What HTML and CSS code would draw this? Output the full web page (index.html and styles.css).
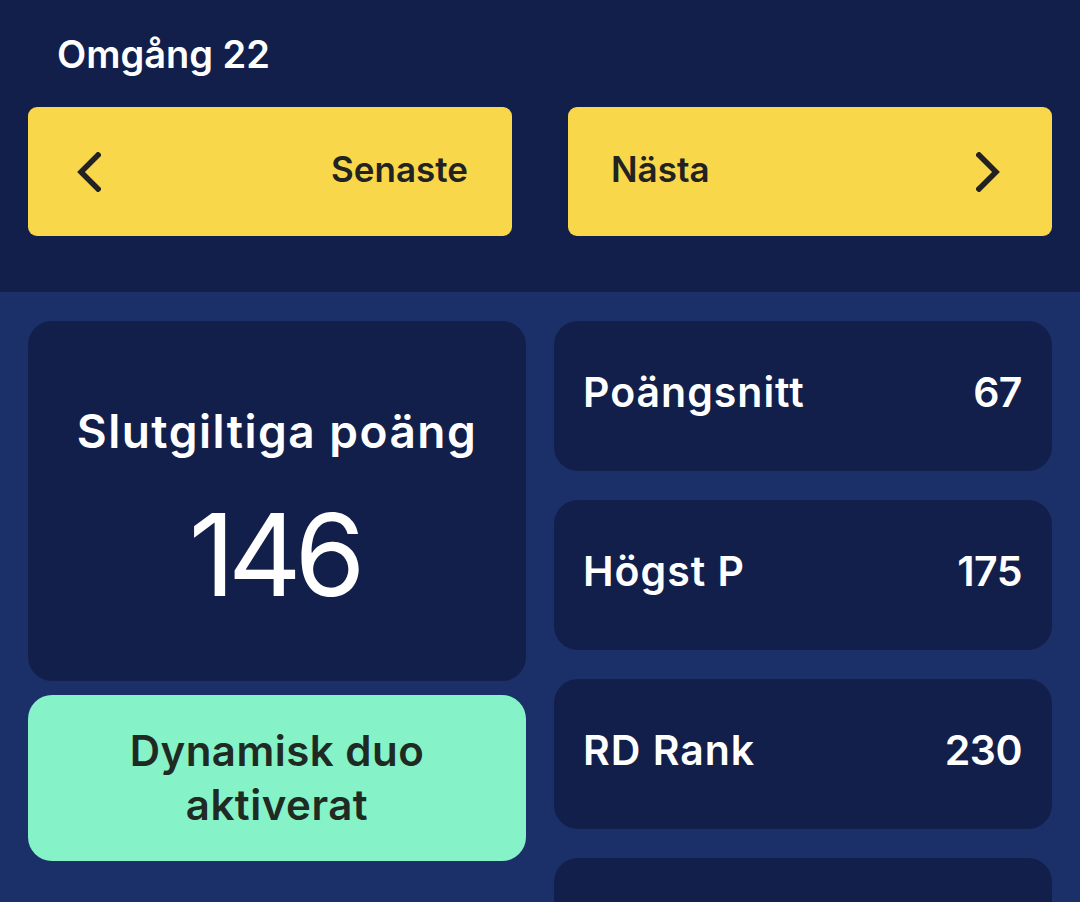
FILE: index.html
```html
<!DOCTYPE html>
<html lang="sv">
<head>
<meta charset="utf-8">
<title>Omgång 22</title>
<link rel="stylesheet" href="styles.css">
</head>
<body>
<header class="top">
  <h1 class="round-title">Omgång 22</h1>
  <nav class="round-nav">
    <button class="nav-btn nav-prev">
      <svg class="chev" viewBox="0 0 24 40" width="24" height="40"><path d="M21 3 L4 20 L21 37" fill="none" stroke="#222222" stroke-width="5.5" stroke-linecap="square"/></svg>
      <span>Senaste</span>
    </button>
    <button class="nav-btn nav-next">
      <span>Nästa</span>
      <svg class="chev" viewBox="0 0 24 40" width="24" height="40"><path d="M3 3 L20 20 L3 37" fill="none" stroke="#222222" stroke-width="5.5" stroke-linecap="square"/></svg>
    </button>
  </nav>
</header>
<main class="stats">
  <div class="col col-left">
    <section class="card score-card">
      <h2 class="score-label">Slutgiltiga poäng</h2>
      <div class="score-value">146</div>
    </section>
    <section class="duo-card">Dynamisk duo<br>aktiverat</section>
  </div>
  <div class="col col-right">
    <div class="card stat-row"><span class="stat-name">Poängsnitt</span><span class="stat-num">67</span></div>
    <div class="card stat-row"><span class="stat-name">Högst P</span><span class="stat-num">175</span></div>
    <div class="card stat-row"><span class="stat-name">RD Rank</span><span class="stat-num">230</span></div>
    <div class="card stat-row"><span class="stat-name"></span><span class="stat-num"></span></div>
  </div>
</main>
</body>
</html>
```
FILE: styles.css
```css
html, body {
  margin: 0;
  padding: 0;
}
body {
  background: #1b3069;
  font-family: "Inter", "Lato", sans-serif;
  color: #ffffff;
  height: 902px;
  overflow: hidden;
}
.top {
  background: #131f4b;
  padding: 28px 28px 56px;
}
.round-title {
  margin: 0 0 27px 29px;
  font-size: 38px;
  line-height: 52px;
  font-weight: 600;
  color: #ffffff;
}
.round-nav {
  display: grid;
  grid-template-columns: 1fr 1fr;
  gap: 56px;
}
.nav-btn {
  height: 129px;
  border: none;
  border-radius: 9px;
  background: #f8d74a;
  display: flex;
  align-items: center;
  justify-content: space-between;
  font-family: inherit;
  font-size: 35px;
  font-weight: 600;
  color: #222222;
  padding: 0 44px 0 49px;
}
.nav-btn span {
  position: relative;
  top: -3px;
}
.nav-next {
  padding: 0 52px 0 43px;
}
.chev {
  display: block;
}
.stats {
  display: grid;
  grid-template-columns: 1fr 1fr;
  gap: 28px;
  padding: 29px 28px 0;
}
.col {
  display: flex;
  flex-direction: column;
}
.col-left {
  gap: 14px;
}
.col-right {
  gap: 29px;
}
.card {
  background: #131f4b;
  border-radius: 24px;
}
.score-card {
  height: 360px;
  display: flex;
  flex-direction: column;
  align-items: center;
  padding-top: 80px;
  box-sizing: border-box;
}
.score-label {
  margin: 0;
  font-size: 46px;
  line-height: 60px;
  letter-spacing: 1.5px;
  font-weight: 600;
}
.score-value {
  font-size: 114px;
  line-height: 140px;
  letter-spacing: -7px;
  text-indent: -7px;
  font-weight: 400;
  margin-top: 24px;
}
.duo-card {
  height: 166px;
  border-radius: 24px;
  background: #86f2c8;
  color: #1f2a22;
  display: flex;
  align-items: center;
  justify-content: center;
  text-align: center;
  font-size: 42px;
  line-height: 54px;
  letter-spacing: 0.5px;
  font-weight: 600;
}
.stat-row {
  height: 150px;
  box-sizing: border-box;
  display: flex;
  align-items: center;
  justify-content: space-between;
  padding: 0 30px 8px 29px;
  font-size: 41px;
  font-weight: 600;
}
.stat-name {
  letter-spacing: 1px;
}
.stat-num {
  letter-spacing: -0.5px;
}
```
